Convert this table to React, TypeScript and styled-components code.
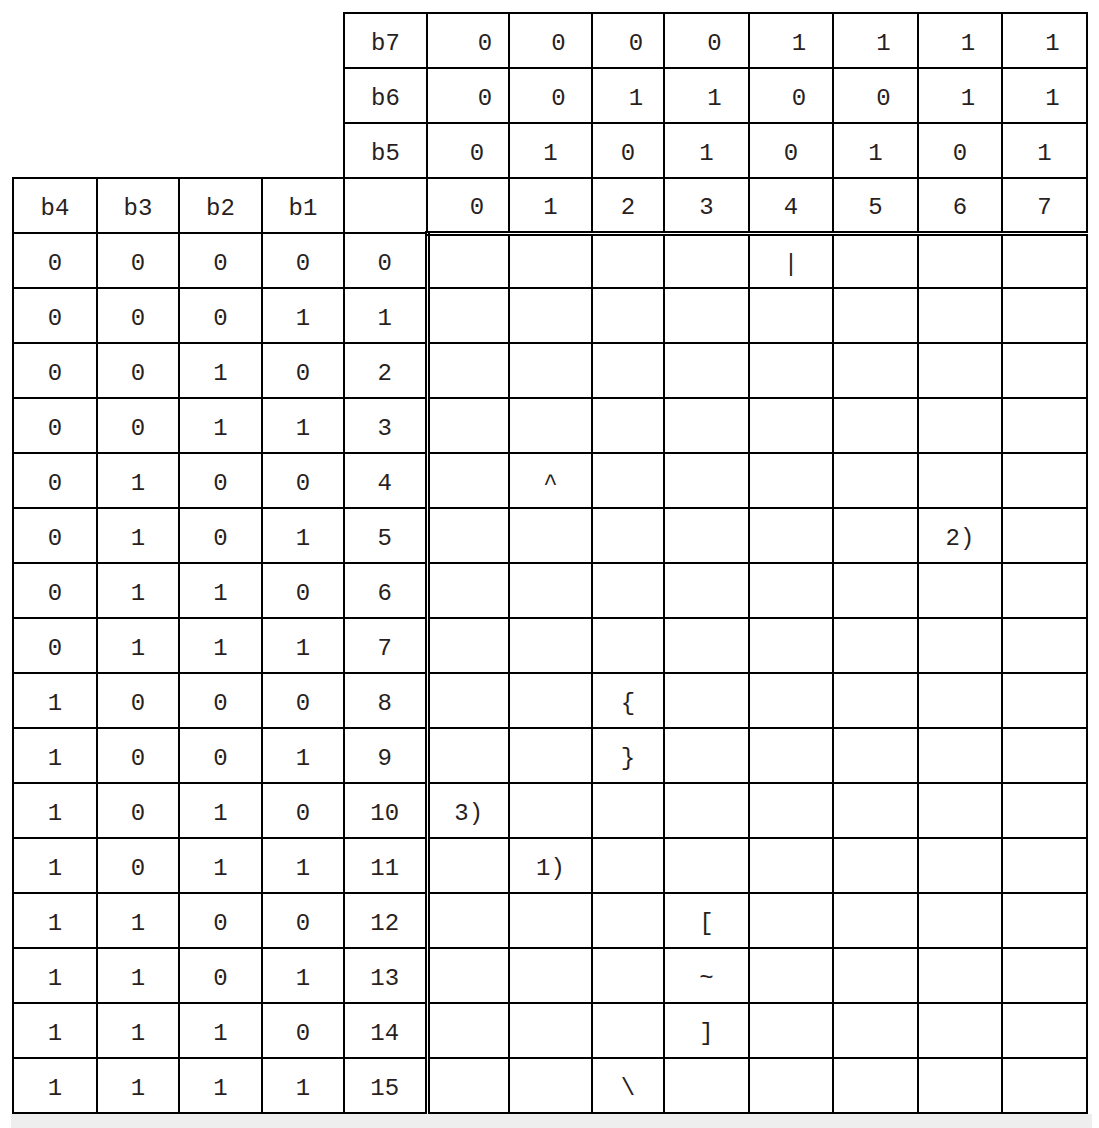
import styled, { createGlobalStyle } from 'styled-components'

const GlobalStyle = createGlobalStyle`
    html, body {
        margin: 0;
        padding: 0;
        background: #ffffff;
    }
`

const colWidths = [84, 82, 83, 82, 83, 82, 83, 72, 85, 84, 85, 84, 85]

const highBits = [
    { label: 'b7', values: ['0', '0', '0', '0', '1', '1', '1', '1'], offset: true },
    { label: 'b6', values: ['0', '0', '1', '1', '0', '0', '1', '1'], offset: true },
    { label: 'b5', values: ['0', '1', '0', '1', '0', '1', '0', '1'], offset: false },
]

const specials: Record<string, string> = {
    '0-4': '|',
    '4-1': '^',
    '5-6': '2)',
    '8-2': '{',
    '9-2': '}',
    '10-0': '3)',
    '11-1': '1)',
    '12-3': '[',
    '13-3': '~',
    '14-3': ']',
    '15-2': '\\',
}

function bits(n: number): string[] {
    return [3, 2, 1, 0].map(b => String((n >> b) & 1))
}

export default function App() {
    return (
        <Page>
            <GlobalStyle />
            <Table>
                <colgroup>
                    {colWidths.map((w, i) => <col key={i} style={{ width: w }} />)}
                </colgroup>
                <tbody>
                    {highBits.map((row, r) => (
                        <tr key={row.label}>
                            {r === 0 && <Blank colSpan={4} rowSpan={3} />}
                            <Cell>{row.label}</Cell>
                            {row.values.map((v, i) => (
                                <Cell key={i} $shift={(row.offset ? 16 : 0) + (i === 0 ? 18 : 0)}>{v}</Cell>
                            ))}
                        </tr>
                    ))}
                    <tr>
                        <Cell>b4</Cell>
                        <Cell>b3</Cell>
                        <Cell>b2</Cell>
                        <Cell>b1</Cell>
                        <Cell />
                        {[0, 1, 2, 3, 4, 5, 6, 7].map(i => (
                            <Cell key={i} $shift={i === 0 ? 18 : 0}>{i}</Cell>
                        ))}
                    </tr>
                    {Array.from({ length: 16 }, (_, r) => (
                        <tr key={r}>
                            {bits(r).map((b, i) => <Cell key={i}>{b}</Cell>)}
                            <Cell>{r}</Cell>
                            {[0, 1, 2, 3, 4, 5, 6, 7].map(c => (
                                <DataCell key={c} $first={c === 0} $top={r === 0}>
                                    {specials[`${r}-${c}`] ?? ''}
                                </DataCell>
                            ))}
                        </tr>
                    ))}
                </tbody>
            </Table>
            <Track />
        </Page>
    )
}


/*___Styling___*/

const Page = styled.div`
    padding: 12px 0 0 12px;
    font-family: "Liberation Mono", "Courier New", monospace;
`

const Table = styled.table`
    border-collapse: collapse;
    table-layout: fixed;
    width: 1075px;
    background: #ffffff;
`

const Blank = styled.td`
    border: none;
    padding: 0;
`

const Cell = styled.td<{ $shift?: number }>`
    border: 2px solid #000000;
    height: 55px;
    padding: 6px 0 0 ${props => props.$shift ?? 0}px;
    box-sizing: border-box;
    text-align: center;
    vertical-align: middle;
    font-size: 24px;
    color: #2a1f1f;
    white-space: pre;
`

const DataCell = styled(Cell)<{ $first?: boolean, $top?: boolean }>`
    ${props => props.$first && 'border-left: 5px double #000000;'}
    ${props => props.$top && 'border-top: 5px double #000000;'}
`

const Track = styled.div`
    margin-left: -1px;
    width: 1081px;
    height: 16px;
    background: #eeeeee;
`
